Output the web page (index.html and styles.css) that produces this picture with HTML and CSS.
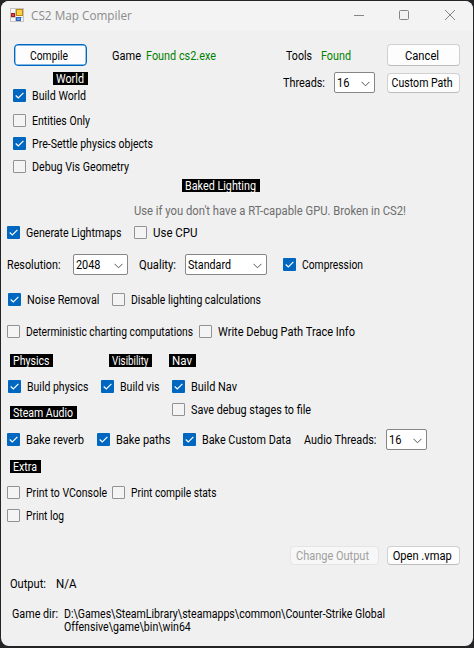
FILE: index.html
```html
<!DOCTYPE html>
<html lang="en">
<head>
<meta charset="utf-8">
<title>CS2 Map Compiler</title>
<link rel="stylesheet" href="styles.css">
</head>
<body>
<svg class="defs" width="0" height="0">
  <symbol id="tick" viewBox="0 0 13 13"><path d="M2.7 6.5 5.3 9 10.4 3.8" fill="none" stroke="#fff" stroke-width="1.15"/></symbol>
  <symbol id="chev" viewBox="0 0 9 6"><path d="M.5 .8 4.5 4.8 8.5 .8" fill="none" stroke="#555" stroke-width="1"/></symbol>
</svg>
<div class="window">
  <header class="titlebar">
    <svg class="appicon" width="14" height="14" viewBox="0 0 14 14">
      <rect x=".5" y=".5" width="13" height="13" fill="#f7f7f7" stroke="#c5c5c5"/>
      <path d="M5.5 0V14M0 9.5H14" stroke="#c5c5c5"/>
      <rect x="6.5" y="1.5" width="6" height="6" fill="#ffd044" stroke="#b98910"/>
      <rect x="1.5" y="5.5" width="3" height="3" fill="#e04a35" stroke="#a51d18"/>
      <rect x="6.5" y="9.5" width="4" height="3" fill="#5d9cf0" stroke="#3265b8"/>
    </svg>
    <span class="title">CS2 Map Compiler</span>
    <svg class="controls" width="104" height="12" viewBox="0 0 104 12" fill="none" stroke="#858585">
      <path d="M0 6.5H10"/><rect x="45.5" y="1.5" width="9" height="9" rx="1"/><path d="M91 1 101 11M101 1 91 11"/>
    </svg>
  </header>
  <main>
    <div class="row r-compile">
      <button class="btn primary"><span data-w="38">Compile</span></button>
      <span class="t" data-w="29">Game</span><span class="t ok" data-w="70">Found cs2.exe</span>
      <span class="t" data-w="26">Tools</span><span class="t ok" data-w="30">Found</span>
      <button class="btn"><span data-w="34">Cancel</span></button>
    </div>
    <div class="top">
      <section class="world">
        <h2 class="tag w-world"><span class="t" data-w="28">World</span></h2>
        <label class="check on"><i><svg><use href="#tick"/></svg></i><span class="t" data-w="54">Build World</span></label>
        <label class="check"><i></i><span class="t" data-w="58">Entities Only</span></label>
        <label class="check on"><i><svg><use href="#tick"/></svg></i><span class="t" data-w="121">Pre-Settle physics objects</span></label>
        <label class="check"><i></i><span class="t" data-w="97">Debug Vis Geometry</span></label>
      </section>
      <div class="row r-threads">
        <span class="t" data-w="42">Threads:</span>
        <div class="combo"><span class="t" data-w="12.5">16</span><svg><use href="#chev"/></svg></div>
        <button class="btn"><span data-w="61">Custom Path</span></button>
      </div>
    </div>
    <h2 class="tag w-baked"><span class="t" data-w="71">Baked Lighting</span></h2>
    <p class="hint"><span class="t" data-w="272">Use if you don't have a RT-capable GPU. Broken in CS2!</span></p>
    <div class="row r-gen">
      <label class="check on"><i><svg><use href="#tick"/></svg></i><span class="t" data-w="95.5">Generate Lightmaps</span></label>
      <label class="check"><i></i><span class="t" data-w="44.5">Use CPU</span></label>
    </div>
    <div class="row r-res">
      <span class="t" data-w="53.5">Resolution:</span>
      <div class="combo"><span class="t" data-w="24.5">2048</span><svg><use href="#chev"/></svg></div>
      <span class="t" data-w="37">Quality:</span>
      <div class="combo"><span class="t" data-w="43">Standard</span><svg><use href="#chev"/></svg></div>
      <label class="check on"><i><svg><use href="#tick"/></svg></i><span class="t" data-w="61">Compression</span></label>
    </div>
    <div class="row r-noise">
      <label class="check on"><i><svg><use href="#tick"/></svg></i><span class="t" data-w="72.5">Noise Removal</span></label>
      <label class="check"><i></i><span class="t" data-w="130">Disable lighting calculations</span></label>
    </div>
    <div class="row r-chart">
      <label class="check"><i></i><span class="t" data-w="167">Deterministic charting computations</span></label>
      <label class="check"><i></i><span class="t" data-w="137">Write Debug Path Trace Info</span></label>
    </div>
    <div class="row r-tags">
      <h2 class="tag w-phys"><span class="t" data-w="36.5">Physics</span></h2>
      <h2 class="tag w-vis"><span class="t" data-w="36.5">Visibility</span></h2>
      <h2 class="tag w-nav"><span class="t" data-w="20">Nav</span></h2>
    </div>
    <div class="row r-build">
      <label class="check on"><i><svg><use href="#tick"/></svg></i><span class="t" data-w="61.5">Build physics</span></label>
      <label class="check on"><i><svg><use href="#tick"/></svg></i><span class="t" data-w="39.5">Build vis</span></label>
      <label class="check on"><i><svg><use href="#tick"/></svg></i><span class="t" data-w="46">Build Nav</span></label>
    </div>
    <div class="row r-steam">
      <h2 class="tag w-steam"><span class="t" data-w="60">Steam Audio</span></h2>
      <label class="check"><i></i><span class="t" data-w="120">Save debug stages to file</span></label>
    </div>
    <div class="row r-bake">
      <label class="check on"><i><svg><use href="#tick"/></svg></i><span class="t" data-w="58">Bake reverb</span></label>
      <label class="check on"><i><svg><use href="#tick"/></svg></i><span class="t" data-w="54.5">Bake paths</span></label>
      <label class="check on"><i><svg><use href="#tick"/></svg></i><span class="t" data-w="89">Bake Custom Data</span></label>
      <span class="t" data-w="72.5">Audio Threads:</span>
      <div class="combo"><span class="t" data-w="12.5">16</span><svg><use href="#chev"/></svg></div>
    </div>
    <h2 class="tag w-extra"><span class="t" data-w="24">Extra</span></h2>
    <div class="row r-print">
      <label class="check"><i></i><span class="t" data-w="81">Print to VConsole</span></label>
      <label class="check"><i></i><span class="t" data-w="85.5">Print compile stats</span></label>
      <label class="check"><i></i><span class="t" data-w="38">Print log</span></label>
    </div>
    <div class="row r-open">
      <button class="btn disabled" disabled><span data-w="73">Change Output</span></button>
      <button class="btn"><span data-w="59">Open .vmap</span></button>
    </div>
    <div class="row r-output"><span class="t" data-w="36">Output:</span><span class="t" data-w="20.5">N/A</span></div>
    <div class="row r-dir"><span class="t" data-w="46">Game dir:</span><span class="t" data-w="321">D:\Games\SteamLibrary\steamapps\common\Counter-Strike Global<br>Offensive\game\bin\win64</span></div>
  </main>
</div>
<script src="labels.js"></script>
</body>
</html>
```
FILE: labels.js
```js
// Condense each caption to its control's label width.
document.querySelectorAll("[data-w]").forEach(function (el) {
  var natural = el.getBoundingClientRect().width;
  el.style.transform = "scaleX(" + (el.dataset.w / natural).toFixed(4) + ")";
});
```
FILE: styles.css
```css
* { box-sizing: border-box; }
body { margin: 0; background: #242326; font: 12.5px/13px Roboto, "Liberation Sans", sans-serif; color: #000; overflow: hidden; }
.defs { display: block; }
.window { width: 472px; height: 645px; margin: 1px 1px 2px; background: #f0f0f0; border-radius: 8px; overflow: hidden; }
.titlebar { height: 30px; background: #f3f3f3; display: flex; align-items: center; padding: 0 0 0 9px; }
.appicon { margin-bottom: 2px; }
.title { width: 100px; margin-left: 7px; font: 12px/16px "Open Sans", sans-serif; color: #8b8b8b; white-space: nowrap; transform: scaleX(.98); transform-origin: 0 50%; }
.controls { margin-left: 223px; margin-top: -2px; }
main { padding-top: 13px; }
.t { display: inline-block; white-space: nowrap; transform-origin: 0 50%; justify-self: start; flex: none; }
.ok { color: #008000; }
.row { display: grid; align-items: center; }
.btn { height: 22px; padding: 0; border: 1px solid #d0d0d0; border-bottom-color: #bcbcbc; border-radius: 4px; background: #fdfdfd; font: inherit; color: #000; display: flex; align-items: center; justify-content: center; }
.btn span { white-space: nowrap; flex: none; margin-right: 3px; }
.primary { border-color: #0067c0; box-shadow: inset 0 0 0 .4px #0078d4; }
.disabled { background: #f7f7f7; border-color: #e5e5e5; color: #a0a0a0; }
.combo { height: 21px; border: 1px solid #868686; border-radius: 2px; background: #fff; display: flex; align-items: center; justify-content: space-between; padding: 0 4px 0 2px; }
.combo svg { width: 9px; height: 6px; flex: none; margin-top: 2px; }
.check { display: flex; align-items: center; height: 13px; gap: 5.5px; }
.check i { width: 13px; height: 13px; flex: none; border: 1px solid #929292; background: #f4f4f4; border-radius: 1px; }
.check.on i { border: 0; background: #0067c0; }
.check svg { display: block; width: 13px; height: 13px; }
.tag { height: 13px; margin: 0; padding-left: 3px; font: inherit; background: #000; color: #fff; display: block; }
.r-compile { height: 22px; grid-template-columns: 98px 34px 140px 35px 66px 73px; margin-left: 13px; }
.r-compile .primary { width: 73px; }
.top { display: flex; justify-content: space-between; height: 113px; padding: 6px 13px 0 12px; }
.world .check { margin-bottom: 10px; }
.world .check.on:nth-child(2) { margin-bottom: 12px; }
.w-world { width: 35px; margin: 0 0 4px 40px; }
.r-threads { width: 177px; height: 21px; grid-template-columns: 51px 41px 85px; }
.r-threads .btn { margin-left: 12px; width: 73px; height: 20px; }
.w-baked { width: 78px; margin-left: 181px; }
.hint { margin: 12px 0 0 133px; color: #6d6d6d; height: 13px; }
.r-gen { margin: 9px 0 0 6px; grid-template-columns: 127px 100px; }
.r-res { margin: 15px 0 0 6px; height: 21px; grid-template-columns: 66px 55px 11px 46px 82px 16px 100px; }
.r-res > :nth-child(3) { grid-column: 4; }
.r-res > :nth-child(4) { grid-column: 5; }
.r-res > :nth-child(5) { grid-column: 7; }
.r-noise { margin: 18px 0 0 7px; grid-template-columns: 104px 150px; }
.r-chart { margin: 19px 0 0 6px; grid-template-columns: 192px 150px; }
.r-tags { margin: 16px 0 0 9px; grid-template-columns: 99px 60px 27px; }
.w-phys, .w-vis { width: 43px; }
.w-nav { width: 27px; }
.r-build { margin: 13px 0 0 7px; grid-template-columns: 93px 71px 100px; }
.r-steam { margin: 10px 0 0 9px; height: 16px; grid-template-columns: 162px 150px; align-items: start; }
.w-steam { width: 67px; margin-top: 3px; }
.r-bake { margin: 10px 0 0 6px; height: 21px; grid-template-columns: 90px 86px 121px 82px 41px; }
.w-extra { width: 31px; margin: 10px 0 0 9px; }
.r-print { margin: 13px 0 0 6px; grid-template-columns: 105px 150px; row-gap: 10px; }
.r-open { margin: 24px 0 0 289px; grid-template-columns: 89px 73px; column-gap: 8px; }
.r-open .btn { height: 19px; }
.r-output { margin: 12px 0 0 9px; grid-template-columns: 46px 100px; }
.r-dir { margin: 17px 0 0 11px; grid-template-columns: 52px 350px; align-items: start; }
```
